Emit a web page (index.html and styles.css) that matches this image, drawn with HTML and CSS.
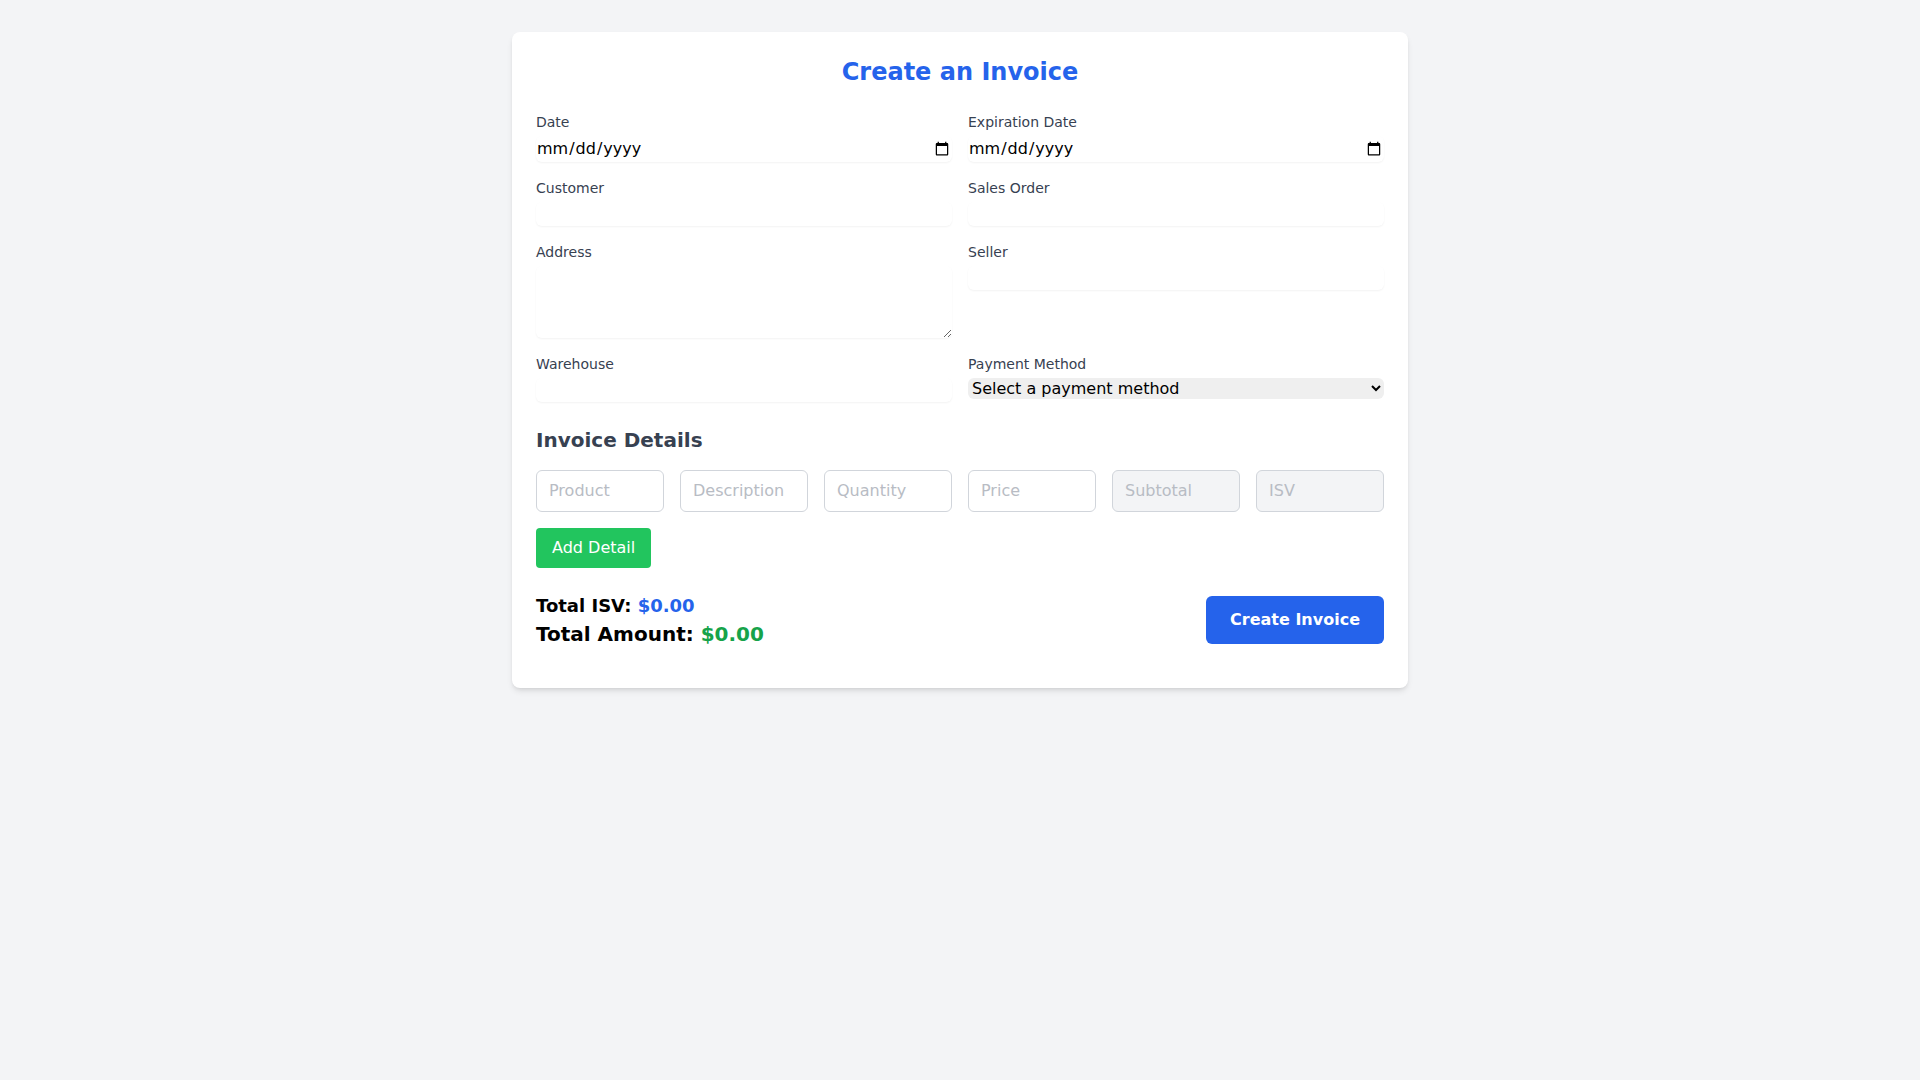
FILE: index.html
```html
<!DOCTYPE html>
<html lang="en">
<head>
  <meta charset="UTF-8">
  <meta name="viewport" content="width=device-width, initial-scale=1.0">
  <title>Create an Invoice</title>
  <link rel="stylesheet" href="styles.css">
</head>
<body>
  <div class="invoice-card">
    <h1 class="invoice-title">Create an Invoice</h1>

    <form id="invoiceForm">
      <div class="form-grid">
        <div class="field">
          <label for="date">Date</label>
          <input type="date" id="date" class="plain-input">
        </div>
        <div class="field">
          <label for="expirationDate">Expiration Date</label>
          <input type="date" id="expirationDate" class="plain-input">
        </div>
        <div class="field">
          <label for="customer">Customer</label>
          <input type="text" id="customer" class="plain-input">
        </div>
        <div class="field">
          <label for="salesOrder">Sales Order</label>
          <input type="text" id="salesOrder" class="plain-input">
        </div>
        <div class="field">
          <label for="address">Address</label>
          <textarea id="address" class="plain-input" rows="3"></textarea>
        </div>
        <div class="field">
          <label for="seller">Seller</label>
          <input type="text" id="seller" class="plain-input">
        </div>
        <div class="field">
          <label for="warehouse">Warehouse</label>
          <input type="text" id="warehouse" class="plain-input">
        </div>
        <div class="field">
          <label for="paymentMethod">Payment Method</label>
          <select id="paymentMethod" class="plain-select">
            <option value="">Select a payment method</option>
            <option value="cash">Cash</option>
            <option value="card">Credit Card</option>
            <option value="transfer">Bank Transfer</option>
          </select>
        </div>
      </div>

      <h2 class="section-title">Invoice Details</h2>

      <div class="detail-row">
        <input type="text" class="detail-input" placeholder="Product">
        <input type="text" class="detail-input" placeholder="Description">
        <input type="number" class="detail-input" placeholder="Quantity">
        <input type="number" class="detail-input" placeholder="Price">
        <input type="text" class="detail-input readonly" placeholder="Subtotal" readonly>
        <input type="text" class="detail-input readonly" placeholder="ISV" readonly>
      </div>

      <button type="button" class="btn-add">Add Detail</button>

      <div class="invoice-footer">
        <div class="totals">
          <p class="total-isv">Total ISV: <span class="isv-amount">$0.00</span></p>
          <p class="total-line">Total Amount: <span class="total-amount">$0.00</span></p>
        </div>
        <button type="submit" class="btn-create">Create Invoice</button>
      </div>
    </form>
  </div>
</body>
</html>
```

FILE: styles.css
```css
body {
  margin: 0;
  padding: 32px 0;
  background: #f3f4f6;
  font-family: "DejaVu Sans", sans-serif;
  line-height: 1.5;
  color: #000;
}

h1, h2, p {
  margin: 0;
}

input, select, textarea, button {
  font-family: inherit;
  font-size: 100%;
  line-height: inherit;
  color: inherit;
  margin: 0;
  padding: 0;
  border: 0 solid #e5e7eb;
}

input::placeholder {
  color: #b8bcc4;
}

.invoice-card {
  width: 896px;
  margin: 0 auto;
  padding: 24px 24px 40px;
  box-sizing: border-box;
  background: white;
  border-radius: 8px;
  box-shadow: 0 4px 6px -1px rgba(0, 0, 0, 0.1), 0 2px 4px -2px rgba(0, 0, 0, 0.1);
}

.invoice-title {
  font-size: 24px;
  line-height: 32px;
  font-weight: bold;
  color: #2563eb;
  text-align: center;
  margin-bottom: 24px;
}

.form-grid {
  display: grid;
  grid-template-columns: 1fr 1fr;
  gap: 16px;
  align-items: start;
}

.field label {
  display: block;
  font-size: 14px;
  line-height: 20px;
  color: #374151;
}

.plain-input {
  display: block;
  width: 100%;
  box-sizing: border-box;
  margin-top: 4px;
  border-radius: 6px;
  box-shadow: 0 1px 2px 0 rgba(0, 0, 0, 0.05);
  background: white;
}

textarea.plain-input {
  resize: vertical;
}

.plain-select {
  display: block;
  width: 100%;
  margin-top: 4px;
  border-radius: 6px;
}

.section-title {
  font-size: 20px;
  line-height: 28px;
  font-weight: bold;
  color: #374151;
  margin: 24px 0 16px;
}

.detail-row {
  display: grid;
  grid-template-columns: repeat(6, 1fr);
  gap: 16px;
}

.detail-input {
  width: 100%;
  box-sizing: border-box;
  padding: 8px 12px;
  border: 1px solid #d1d5db;
  border-radius: 6px;
  background: white;
}

.detail-input.readonly {
  background: #f3f4f6;
}

.btn-add {
  margin-top: 16px;
  padding: 8px 16px;
  background: #22c55e;
  color: white;
  border-radius: 4px;
  cursor: pointer;
}

.invoice-footer {
  display: flex;
  justify-content: space-between;
  align-items: center;
  margin-top: 24px;
}

.totals p {
  font-size: 18px;
  line-height: 28px;
  font-weight: bold;
}

.totals .total-line {
  font-size: 20px;
}

.isv-amount {
  color: #2563eb;
}

.total-amount {
  color: #16a34a;
}

.btn-create {
  padding: 12px 24px;
  background: #2563eb;
  color: white;
  font-weight: bold;
  border-radius: 6px;
  cursor: pointer;
}
```
